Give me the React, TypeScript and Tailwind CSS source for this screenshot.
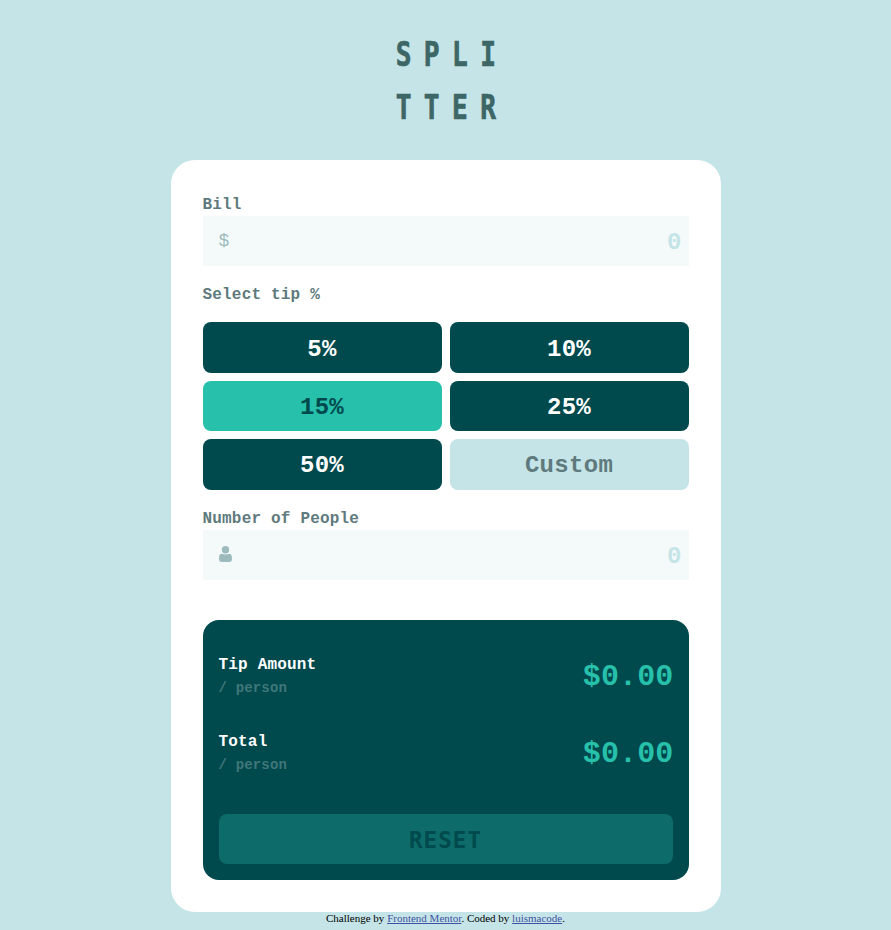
import React, { useState } from "react";

const tips = ["5%", "10%", "15%", "25%", "50%"];

function Logo() {
  return (
    <svg
      width="112"
      height="92"
      viewBox="0 0 112 92"
      className="block overflow-visible font-['DejaVu_Sans_Mono',monospace] text-[34px] leading-none font-bold"
      fill="#3d6666"
      stroke="#3d6666"
      strokeWidth="0.7"
      role="img"
      aria-label="Splitter"
    >
      {["SPLI", "TTER"].map((word, row) =>
        word.split("").map((letter, i) => (
          <text
            key={`${row}-${i}`}
            textAnchor="middle"
            transform={`translate(${13.5 + i * 28.2} ${30.5 + row * 53}) scale(0.77 1)`}
          >
            {letter}
          </text>
        )),
      )}
    </svg>
  );
}

function Field({ label, icon }: { label: string; icon: React.ReactNode }) {
  return (
    <label className="block">
      <span className="block h-6 text-base leading-[26px] tracking-[0.19px] text-[#5e7a7d]">{label}</span>
      <span className="flex h-[50px] items-center bg-[#f4fafa] pr-[7px] pl-4">
        {icon}
        <input
          placeholder="0"
          className="w-full min-w-0 bg-transparent pt-1 text-right text-2xl font-bold text-[#00494d] outline-none placeholder:text-[#c5e4e7]"
        />
      </span>
    </label>
  );
}

function Result({ title }: { title: string }) {
  return (
    <div className="flex h-[77px] items-center justify-between">
      <div>
        <p className="text-base leading-6 tracking-[0.19px] text-white">{title}</p>
        <p className="text-sm leading-[22px] tracking-[0.17px] text-[#3f777a]">/ person</p>
      </div>
      <p className="-mr-px pt-0.5 text-[30px] leading-10 tracking-[0.15px] text-[#26c0ab]">$0.00</p>
    </div>
  );
}

export default function App() {
  const [selected, setSelected] = useState("15%");
  return (
    <div className="flex h-[930px] flex-col items-center overflow-hidden bg-[#c5e4e7] pt-[35px] font-['Liberation_Mono',monospace] font-bold">
      <Logo />
      <main className="mt-[33px] h-[752px] w-[550px] shrink-0 rounded-3xl bg-white p-8">
        <Field
          label="Bill"
          icon={<span className="text-lg font-normal text-[#9dbbbd]">$</span>}
        />
        <p className="mt-[17px] h-[39px] text-base leading-6 tracking-[0.19px] text-[#5e7a7d]">Select tip %</p>
        <div className="grid auto-rows-[50.5px] grid-cols-2 gap-2 text-2xl tracking-[0.29px]">
          {tips.map((tip) => (
            <button
              key={tip}
              onClick={() => setSelected(tip)}
              className={
                tip === selected
                  ? "rounded-lg bg-[#26c0ab] pt-[5px] text-[#00494d]"
                  : "rounded-lg bg-[#00494d] pt-[5px] text-white last-of-type:pt-1 nth-5:pt-1"
              }
            >
              {tip}
            </button>
          ))}
          <button className="rounded-lg bg-[#c5e4e7] pt-1 text-[#5e7a7d]">Custom</button>
        </div>
        <div className="mt-[16.5px]">
          <Field
            label="Number of People"
            icon={
              <svg width="13" height="16" viewBox="0 0 13 16" fill="#9dbbbd" className="mb-0.5 shrink-0">
                <circle cx="6.5" cy="3.7" r="3.7" />
                <path d="M3 7.8C4.9 8.8 8.1 8.8 10 7.8C12.2 7.8 13 9.7 13 12.7C13 14.8 12 16 10.2 16H2.8C1 16 0 14.8 0 12.7C0 9.7 .8 7.8 3 7.8Z" />
              </svg>
            }
          />
        </div>
        <section className="mt-10 h-[260px] rounded-2xl bg-[#00494d] px-4 pt-[17px]">
          <Result title="Tip Amount" />
          <Result title="Total" />
          <button className="mt-[23px] h-[50px] w-full rounded-lg bg-[#0d6c69] pt-1 font-['DejaVu_Sans_Mono',monospace] text-[22.5px] tracking-[1.1px] text-[#00494d]">
            RESET
          </button>
        </section>
      </main>
      <footer className="font-['Liberation_Serif',serif] text-[11px] leading-[13px] font-normal text-black">
        Challenge by <a className="text-[#3e52a3] underline">Frontend Mentor</a>. Coded by{" "}
        <a className="text-[#3e52a3] underline">luismacode</a>.
      </footer>
    </div>
  );
}
